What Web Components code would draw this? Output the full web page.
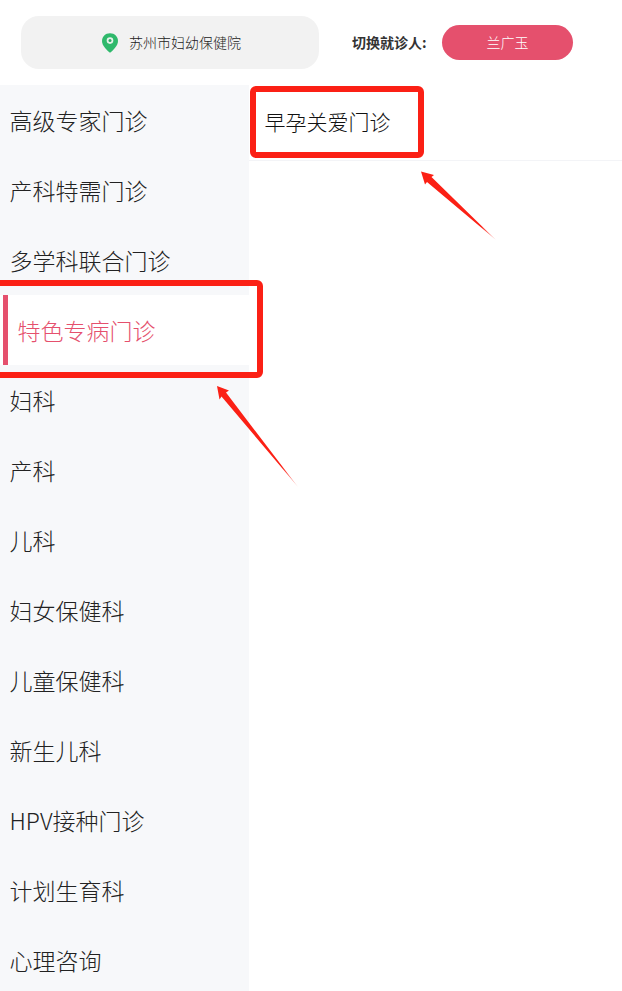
<!DOCTYPE html>
<html lang="zh-CN"><head><meta charset="utf-8"><title>科室</title>
<style>
html,body{margin:0;padding:0;background:#fff;height:991px;overflow:hidden}
body{font-family:"Noto Sans CJK SC","Liberation Sans",sans-serif;position:relative}
</style></head><body>
<app-page></app-page>
<template id="t-page"><style>
:host{display:flex;flex-direction:column;width:622px;height:991px;overflow:hidden;position:relative}
.main{display:flex;flex:1;min-height:0}
</style>
<top-bar></top-bar>
<div class="main"><dept-menu></dept-menu><sub-list></sub-list></div>
<mark-up></mark-up>
</template>
<script>
const def=(n,html)=>customElements.define(n,class extends HTMLElement{constructor(){super();this.attachShadow({mode:'open'}).innerHTML=html;}});
def('app-page',document.getElementById('t-page').innerHTML);
def('top-bar',`<style>
:host{display:flex;align-items:center;height:85px;flex:none;box-sizing:border-box;padding:0 0 0 21px}
.loc{width:298px;height:53px;margin-top:-1px;background:#f2f2f2;border-radius:18px;display:flex;align-items:center;gap:10px;font-size:14px;font-weight:300;color:#222;padding-left:80px;box-sizing:border-box}
svg{display:block;margin-top:1px}
span.t{margin-top:-1px}
.lab{margin-left:33px;font-size:14px;font-weight:700;color:#333;white-space:nowrap;width:90px;margin-top:-1px}
.btn{width:131px;height:35px;margin-top:-1px;border-radius:18px;background:#e5506d;color:#fff;font-size:14px;font-weight:300;display:flex;align-items:center;justify-content:center}
</style>
<div class="loc"><svg width="18" height="20" viewBox="0 0 18 20"><path d="M9 0.2C4.300 .2 1 3.700 1 8c0 4.600 4.600 8.900 8 11.800C12.400 16.900 17 12.600 17 8 17 3.700 13.700.2 9 .2Z" fill="#2fb96c"/><circle cx="9" cy="7.600" r="3.300" fill="#e6f3ea"/><circle cx="9" cy="7.600" r="1.500" fill="#2fa866"/></svg><span class="t">苏州市妇幼保健院</span></div>
<span class="lab">切换就诊人:</span><div class="btn">兰广玉</div>`);
customElements.define('menu-item',class extends HTMLElement{constructor(){super();this.attachShadow({mode:'open'}).innerHTML=`<style>
:host{display:flex;align-items:center;height:70px;box-sizing:border-box;padding:0 0 1px 9.5px;font-size:23px;font-weight:300;color:#222;white-space:nowrap}
:host([active]){background:#fff;color:#e5506d;padding-left:17.5px;position:relative}
:host([active])::before{content:"";position:absolute;left:3px;top:0;bottom:0;width:5px;background:#e5506d}
</style><slot></slot>`}});
def('dept-menu',`<style>
:host{display:block;width:249px;flex:none;background:#f7f8fa;overflow:hidden}
</style>
<menu-item>高级专家门诊</menu-item><menu-item>产科特需门诊</menu-item><menu-item>多学科联合门诊</menu-item><menu-item active>特色专病门诊</menu-item><menu-item>妇科</menu-item><menu-item>产科</menu-item><menu-item>儿科</menu-item><menu-item>妇女保健科</menu-item><menu-item>儿童保健科</menu-item><menu-item>新生儿科</menu-item><menu-item>HPV接种门诊</menu-item><menu-item>计划生育科</menu-item><menu-item>心理咨询</menu-item>`);
def('sub-list',`<style>
:host{display:block;flex:1;background:#fff}
.row{height:76px;box-sizing:border-box;border-bottom:1px solid #f3f4f7;padding:0 0 3px 15.5px;display:flex;align-items:center;font-size:21px;font-weight:300;color:#111}
</style><div class="row">早孕关爱门诊</div>`);
def('mark-up',`<style>
:host{position:absolute;inset:0;pointer-events:none}
svg{position:absolute;left:0;top:0}
</style>
<svg width="622" height="991" viewBox="0 0 622 991">
<defs>
<linearGradient id="a" gradientUnits="userSpaceOnUse" x1="421" y1="171" x2="496" y2="240"><stop offset="0" stop-color="#fb2015"/><stop offset=".8" stop-color="#fb2015"/><stop offset="1" stop-color="#fb2015" stop-opacity=".3"/></linearGradient>
<linearGradient id="b" gradientUnits="userSpaceOnUse" x1="217" y1="386" x2="298" y2="487"><stop offset="0" stop-color="#fb2015"/><stop offset=".8" stop-color="#fb2015"/><stop offset="1" stop-color="#fb2015" stop-opacity=".3"/></linearGradient>
</defs>
<rect x="253" y="89" width="168" height="66" rx="3" fill="none" stroke="#fb2015" stroke-width="6"/>
<rect x="-3" y="283" width="263" height="92" rx="3" fill="none" stroke="#fb2015" stroke-width="6"/>
<path d="M421 171.500 L434 175 L431.500 177 L496 240 L427 182 L425 184.500 Z" fill="url(#a)"/>
<path d="M217 386 L229 390.500 L226 392.500 L298 487 L221.500 396.500 L219.500 399.500 Z" fill="url(#b)"/>
</svg>`);
</script>
</body></html>
